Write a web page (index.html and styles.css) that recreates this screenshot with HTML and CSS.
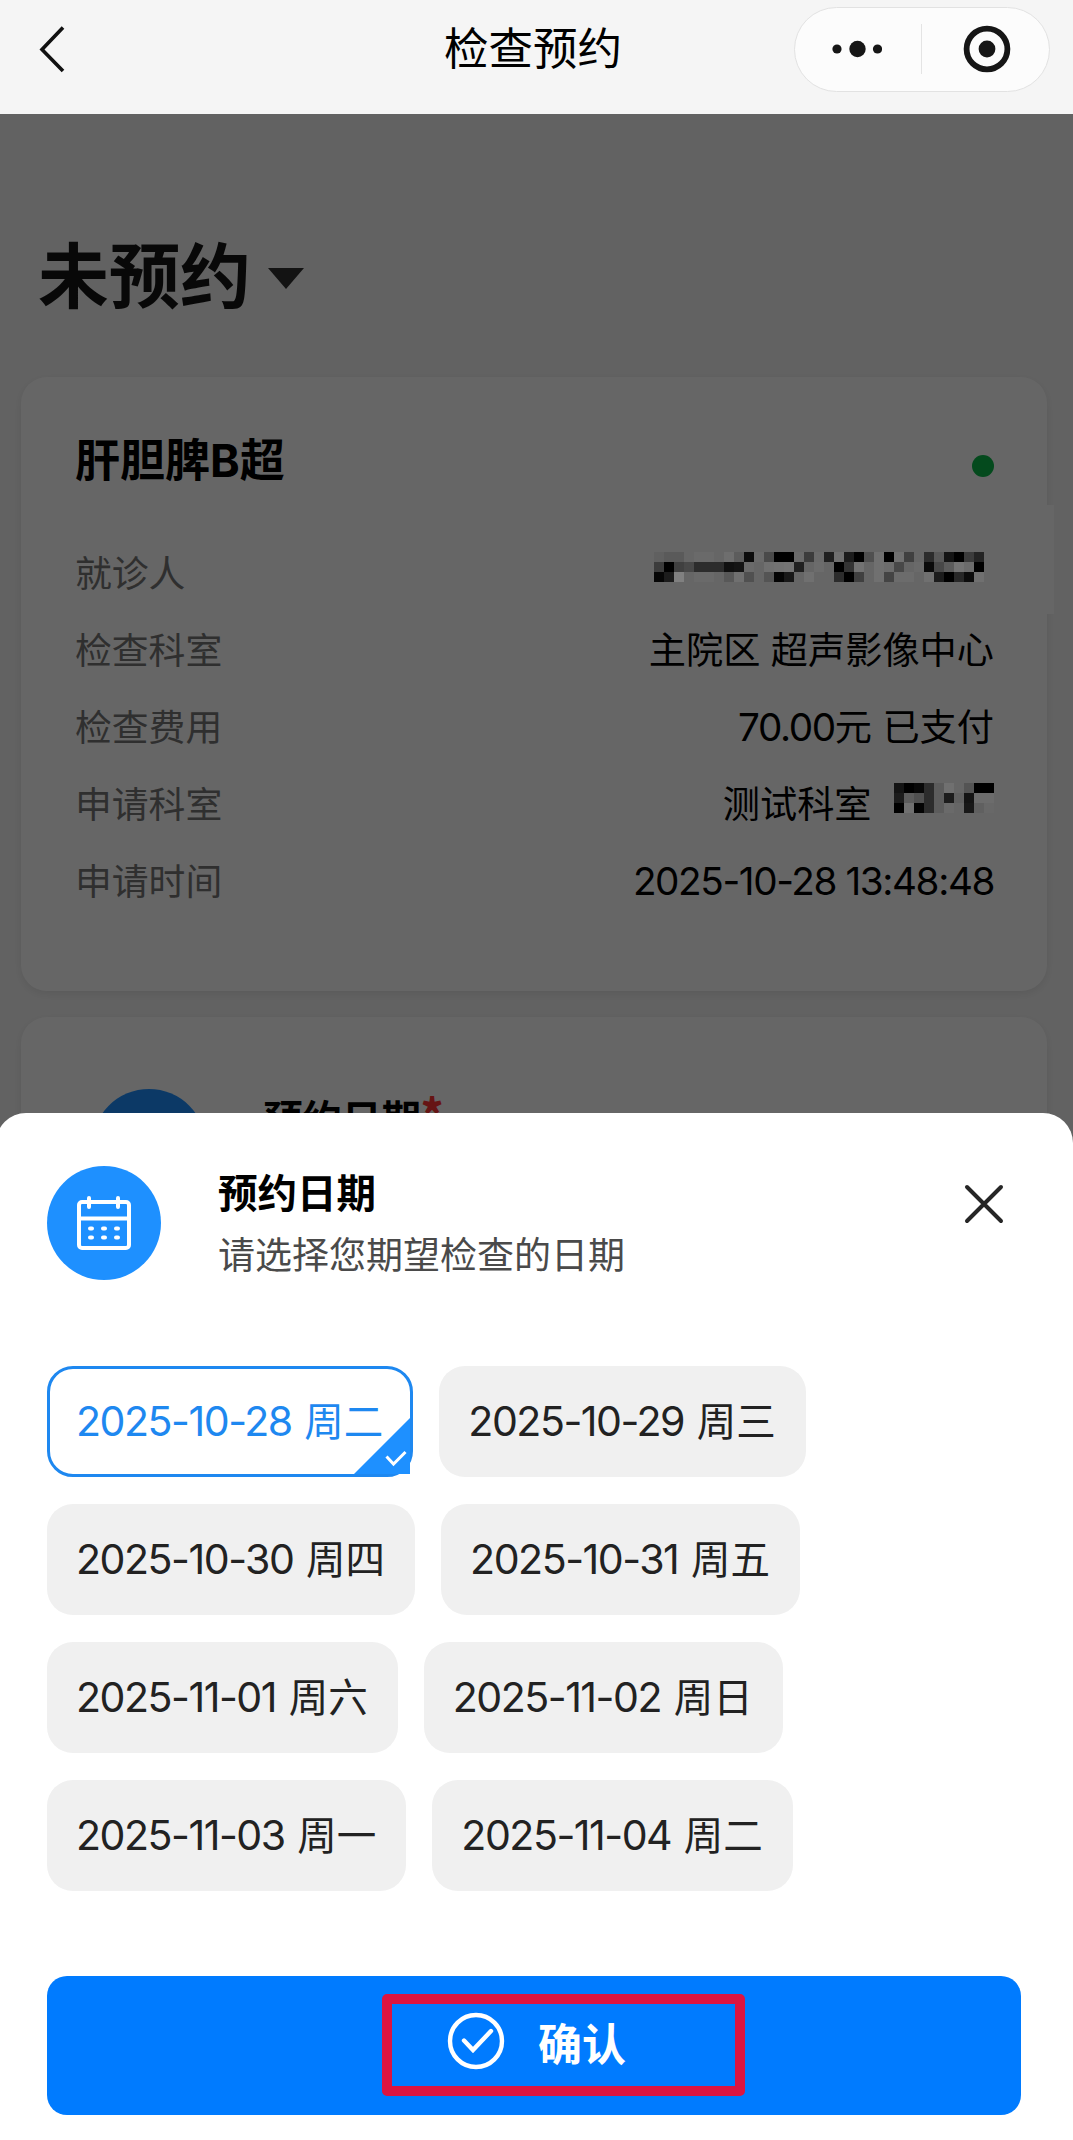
FILE: index.html
```html
<!DOCTYPE html>
<html lang="zh-CN">
  <head>
    <meta charset="utf-8" />
    <title>检查预约</title>
    <meta name="viewport" content="width=device-width, initial-scale=1" />
    <link rel="stylesheet" href="styles.css">
  </head>
  <body>
    <header class="navbar">
      <svg class="nav-back" width="28" height="48" viewBox="0 0 28 48">
        <path d="M25 2.5 4 24.5 25 46" fill="none" stroke="#111" stroke-width="3.6" />
      </svg>
      <h1 class="nav-title">检查预约</h1>
      <div class="capsule">
        <svg width="50" height="20" viewBox="0 0 50 20" fill="#161616">
          <circle cx="5" cy="10" r="4.6" />
          <circle cx="25.5" cy="10" r="8.2" />
          <circle cx="45.5" cy="10" r="4.6" />
        </svg>
        <span class="capsule-line"></span>
        <svg width="48" height="48" viewBox="0 0 48 48">
          <circle cx="24" cy="24" r="20.4" fill="none" stroke="#161616" stroke-width="5.8" />
          <circle cx="24" cy="24" r="8.4" fill="#161616" />
        </svg>
      </div>
    </header>

    <main class="page">
      <div class="filter">
        <span>未预约</span>
        <i class="caret"></i>
      </div>

      <section class="card">
        <div class="card-head">
          <h2>肝胆脾B超</h2>
          <i class="dot"></i>
        </div>
        <div class="row">
          <span class="label">就诊人</span>
          <span class="value"><span class="mosaic mosaic-name" id="patient"></span></span>
        </div>
        <div class="row">
          <span class="label">检查科室</span>
          <span class="value">主院区 超声影像中心</span>
        </div>
        <div class="row">
          <span class="label">检查费用</span>
          <span class="value"><span class="num">70.00</span>元 已支付</span>
        </div>
        <div class="row">
          <span class="label">申请科室</span>
          <span class="value">测试科室 <span class="mosaic" id="doctor"></span></span>
        </div>
        <div class="row">
          <span class="label">申请时间</span>
          <span class="value"><span class="num">2025-10-28 13:48:48</span></span>
        </div>
        <i class="patch"></i>
      </section>

      <section class="card card-date">
        <i class="round"></i>
        <h3>预约日期<em>*</em></h3>
      </section>
    </main>

    <div class="mask"></div>

    <div class="sheet">
      <div class="sheet-head">
        <span class="round">
          <svg width="58" height="58" viewBox="0 0 58 58" fill="none" stroke="#fff" stroke-width="4" stroke-linecap="round">
            <rect x="4" y="8" width="50" height="46" rx="3" />
            <path d="M4 24.5h50M14 4v9M43 4v9" />
            <path d="M15 34.500h2M28 34.500h2M41 34.500h2M15 43.500h2M28 43.500h2M41 43.500h2" />
          </svg>
        </span>
        <div class="sheet-text">
          <h3>预约日期</h3>
          <p>请选择您期望检查的日期</p>
        </div>
        <svg class="close" width="42" height="42" viewBox="0 0 42 42">
          <path d="M4 4l34 34M38 4L4 38" stroke="#262626" stroke-width="4" stroke-linecap="round" />
        </svg>
      </div>

      <div class="dates">
        <div class="date-row">
          <div class="chip active">
            <span class="num">2025-10-28</span> 周二
            <svg class="tick" width="56" height="56" viewBox="0 0 56 56">
              <path d="M56 0v56H0z" fill="#1e90ff" />
              <path d="M32.500 38.500l7 7.500L51.500 34" fill="none" stroke="#fff" stroke-width="3" />
            </svg>
          </div>
          <div class="chip"><span class="num">2025-10-29</span> 周三</div>
        </div>
        <div class="date-row">
          <div class="chip"><span class="num">2025-10-30</span> 周四</div>
          <div class="chip"><span class="num">2025-10-31</span> 周五</div>
        </div>
        <div class="date-row">
          <div class="chip"><span class="num">2025-11-01</span> 周六</div>
          <div class="chip"><span class="num">2025-11-02</span> 周日</div>
        </div>
        <div class="date-row">
          <div class="chip"><span class="num">2025-11-03</span> 周一</div>
          <div class="chip"><span class="num">2025-11-04</span> 周二</div>
        </div>
      </div>

      <button class="confirm">
        <svg width="58" height="58" viewBox="0 0 58 58" fill="none" stroke="#fff" stroke-width="4.4">
          <circle cx="29" cy="29" r="26" />
          <path d="M17 28.500l9 9.500L44 19" stroke-linecap="round" />
        </svg>
        <span>确认</span>
        <i class="highlight"></i>
      </button>
    </div>

    <script>
      // grey level of each 10px block, two hex digits per block
      const patient = [
        "605a5a666a6a666e5c0c6a4a00006a3c6a20701c005070007040662c5814003c24",
        "3c0040482c2c2c10146a6670727420666c6600347266706c48666a0a485c746c00",
        "061c80666a6a6658705066540418667066662c00406670446c6c66701c00280c70",
      ];
      const doctor = [
        "1400082c5c7066540000",
        "1c5c502c5c1c60146c6c",
        "0070042c5c6a66186068",
      ];

      const drawMosaic = (id, rows) => {
        document.getElementById(id).innerHTML = rows
          .map((row) => {
            const blocks = row
              .match(/../g)
              .map((g) => `<b style="background:#${g}${g}${g}"></b>`)
              .join("");
            return `<span class="mosaic-row">${blocks}</span>`;
          })
          .join("");
      };

      drawMosaic("patient", patient);
      drawMosaic("doctor", doctor);
    </script>
  </body>
</html>
```
FILE: styles.css
```css
* {
  box-sizing: border-box;
}
body {
  position: relative;
  width: 1073px;
  height: 2140px;
  margin: 0;
  overflow: hidden;
  background: #f5f5f5;
  font-family: Inter, "Noto Sans CJK SC", sans-serif;
  color: #000;
}
h1,
h2,
h3,
p {
  margin: 0;
}

/* top bar */
.navbar {
  display: grid;
  grid-template-columns: 266px 1fr 288px;
  align-items: center;
  height: 114px;
  padding: 0 23px 16px 38px;
  background: #f5f5f5;
}
.nav-title {
  font-size: 44.5px;
  font-weight: 400;
  line-height: 60px;
  text-align: center;
}
.capsule {
  display: flex;
  align-items: center;
  justify-self: end;
  width: 256px;
  height: 85px;
  padding-left: 37px;
  border: 1px solid #e2e2e2;
  border-radius: 43px;
  background: #fcfcfc;
}
.capsule-line {
  width: 1px;
  height: 50px;
  margin: 0 41px 0 39px;
  background: #e4e4e4;
}

/* page under the mask */
.page {
  height: 2026px;
  padding: 109px 26px 0 21px;
}
.filter {
  display: flex;
  align-items: center;
  height: 96px;
  margin-bottom: 58px;
  padding-left: 17px;
  font-size: 71px;
  font-weight: 700;
  color: #161616;
}
.caret {
  margin: 14px 0 0 17px;
  border: 18px solid transparent;
  border-top: 21px solid #303030;
  border-bottom: 0;
}
.card {
  position: relative;
  height: 614px;
  padding: 54px 53px 0 54px;
  border-radius: 26px;
  background: #fff;
  box-shadow: 0 3px 8px rgba(0, 0, 0, 0.08);
}
.card-head {
  display: flex;
  justify-content: space-between;
  height: 56px;
  margin-bottom: 47px;
}
.card-head h2 {
  font-size: 45px;
  line-height: 59px;
}
.dot {
  width: 22px;
  height: 22px;
  margin-top: 24px;
  border-radius: 50%;
  background: #0cb84a;
}
.row {
  display: flex;
  align-items: center;
  justify-content: space-between;
  height: 77px;
  font-size: 37.2px;
}
.label {
  padding-bottom: 4px;
  font-size: 36.8px;
  color: #777;
}
.value {
  display: flex;
  align-items: center;
  padding-bottom: 4px;
  white-space: pre;
}
.num {
  font-size: 1.04em;
  letter-spacing: -0.036em;
}
.value .num {
  padding-top: 5px;
}

/* pixelated names stay at their own grey, above the mask */
.mosaic {
  position: relative;
  z-index: 2;
  margin: 0 0 7px 12px;
}
.mosaic-name {
  margin-right: 10px;
}
.mosaic-row {
  display: flex;
}
.mosaic-row b {
  width: 10px;
  height: 10px;
}
.patch {
  position: absolute;
  top: 128px;
  right: -7px;
  width: 12px;
  height: 109px;
  background: #fff;
}
.card-date {
  display: flex;
  gap: 57px;
  margin-top: 26px;
  padding: 72px 0 0 71px;
}
.card-date h3 {
  font-size: 39.5px;
  line-height: 62px;
}
.card-date em {
  font: 900 42px/1 "Noto Sans CJK SC", sans-serif;
  vertical-align: 4px;
  color: #f33;
}
.round {
  display: flex;
  flex: none;
  align-items: center;
  justify-content: center;
  width: 114px;
  height: 114px;
  border-radius: 50%;
  background: #1e90ff;
}
.mask {
  position: absolute;
  inset: 114px 0 0;
  z-index: 1;
  background: rgba(0, 0, 0, 0.6);
}

/* bottom sheet */
.sheet {
  position: absolute;
  inset: 1113px 0 0 -4px;
  z-index: 3;
  padding: 53px 52px 0 51px;
  border-radius: 30px 30px 0 0;
  background: #fff;
}
.sheet-head {
  display: flex;
  height: 114px;
}
.sheet-text {
  flex: 1;
  padding: 1px 0 0 57px;
}
.sheet-text h3 {
  font-size: 39.5px;
  line-height: 54px;
}
.sheet-text p {
  margin-top: 8px;
  font-size: 37px;
  line-height: 54px;
  color: #4a4a4a;
}
.close {
  margin: 17px 16px 0 0;
}
.dates {
  display: flex;
  flex-direction: column;
  gap: 27px;
  margin-top: 86px;
}
.date-row {
  display: flex;
  gap: 26px;
}
.chip {
  position: relative;
  height: 111px;
  padding: 0 30px 0 29px;
  border-radius: 26px;
  background: #f0f0f0;
  font-size: 39.5px;
  line-height: 111px;
  word-spacing: 1.5px;
  color: #222;
  white-space: nowrap;
}
.chip.active {
  padding: 0 27px 0 26px;
  border: 3px solid #1e88f0;
  background: #fff;
  line-height: 105px;
  color: #1e88f0;
}
.tick {
  position: absolute;
  right: 0;
  bottom: 0;
}
.confirm {
  position: relative;
  display: flex;
  align-items: center;
  width: 974px;
  height: 139px;
  margin-top: 85px;
  padding: 0 0 10px 400px;
  border: 0;
  border-radius: 20px;
  background: #007bff;
  font: 700 44px "Noto Sans CJK SC", sans-serif;
  color: #fff;
}
.confirm span {
  padding: 3px 0 0 33px;
}
.highlight {
  position: absolute;
  top: 18px;
  left: 335px;
  width: 363px;
  height: 102px;
  border: 10px solid #dc1441;
  border-radius: 5px;
}
```
